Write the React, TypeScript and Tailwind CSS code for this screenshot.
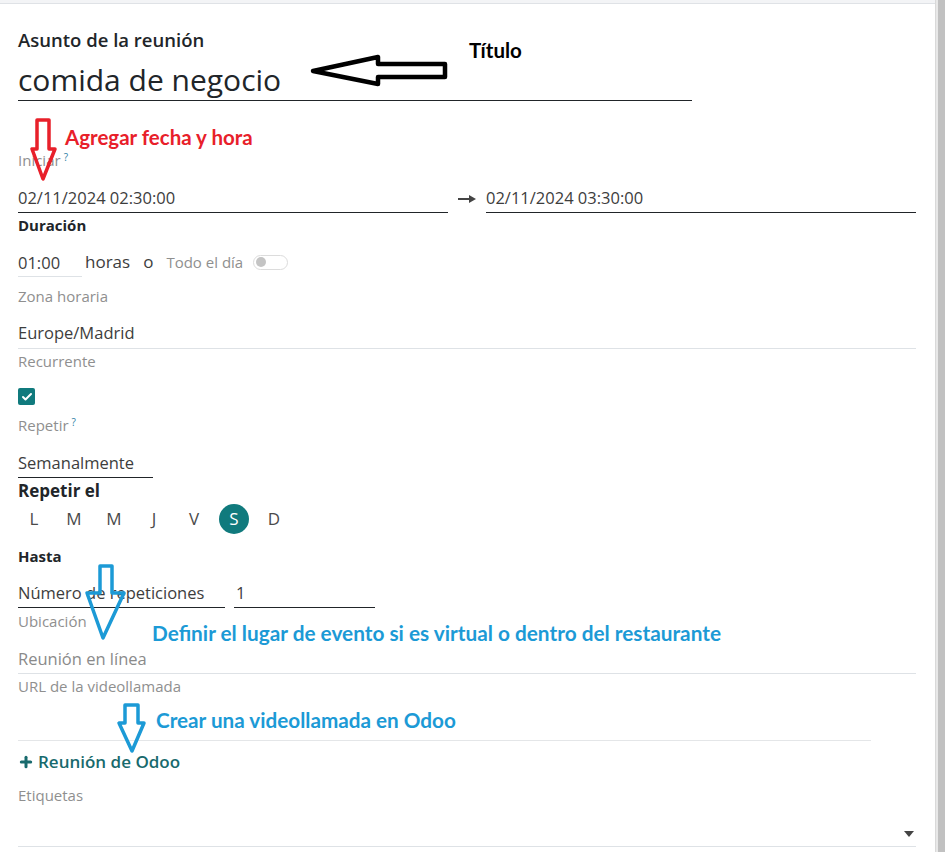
import { Check, Plus } from "lucide-react";

const days = ["L", "M", "M", "J", "V", "S", "D"];

function Label({ text, help, className = "" }: { text: string; help?: boolean; className?: string }) {
  return (
    <div className={`h-[20px] leading-[20px] text-[15px] text-[#8f8f8f] ${className}`}>
      {text}
      {help && <sup className="ml-[3px] text-[10px] text-[#2f7fa6]">?</sup>}
    </div>
  );
}

export default function App() {
  return (
    <div className="flex h-[852px] w-[945px] overflow-hidden bg-white font-['Open_Sans',sans-serif]">
      <div className="relative flex w-[936px] shrink-0 flex-col border-r border-[#d9d9d9]">
        {/* top strip */}
        <div className="h-[4px] shrink-0 border-b border-[#dfe2e6] bg-[#f3f4f6]" />

        <div className="flex flex-col pl-[18px] text-[#212529]">
          <div className="mt-[25px] h-[22px] text-[18.5px] font-semibold leading-[22px]">Asunto de la reunión</div>
          <div className="flex h-[50px] w-[674px] items-end border-b border-[#212529]">
            <span className="pb-[1px] text-[30px] leading-[38px]">comida de negocio</span>
          </div>

          <Label text="Iniciar" help className="mt-[49px]" />
          <div className="flex h-[43px] text-[16.5px] text-[#3d3d3d]">
            <div className="flex w-[430px] items-end border-b border-[#212529] pb-[2px] leading-[24px]">02/11/2024 02:30:00</div>
            <div className="flex w-[38px] items-end justify-center pb-[10px]">
              <svg width="18" height="8" viewBox="0 0 18 8">
                <line x1="0" y1="4" x2="13" y2="4" stroke="#444" strokeWidth="2" />
                <polygon points="11,0 18,4 11,8" fill="#444" />
              </svg>
            </div>
            <div className="flex w-[430px] items-end border-b border-[#212529] pb-[2px] leading-[24px]">02/11/2024 03:30:00</div>
          </div>

          <div className="h-[24px] text-[15px] font-bold leading-[24px]">Duración</div>
          <div className="flex h-[40px] items-end">
            <div className="w-[64px] border-b border-[#dee2e6] pb-[1px] text-[16.5px] leading-[24px] text-[#3d3d3d]">01:00</div>
            <div className="mb-[3px] flex h-[24px] items-center">
              <span className="ml-[3px] text-[17px] text-[#3d3d3d]">horas</span>
              <span className="ml-[13px] text-[17px] text-[#3d3d3d]">o</span>
              <span className="ml-[13px] text-[15px] text-[#8f8f8f]">Todo el día</span>
              <span className="ml-[10px] flex h-[15px] w-[35px] items-center rounded-full border border-[#dcdcdc] bg-white pl-[2px]">
                <span className="h-[10px] w-[10px] rounded-full bg-[#c4c4c4]" />
              </span>
            </div>
          </div>

          <Label text="Zona horaria" className="mt-[9px]" />
          <div className="flex h-[43px] w-[898px] items-end border-b border-[#dee2e6] pb-[3px] text-[16.5px] leading-[24px] text-[#3d3d3d]">
            Europe/Madrid
          </div>

          <Label text="Recurrente" className="mt-[2px]" />
          <div className="mt-[17px] flex h-[17px] w-[17px] items-center justify-center rounded-[2px] bg-[#107a7d]">
            <Check size={12} strokeWidth={4} className="text-white" />
          </div>

          <Label text="Repetir" help className="mt-[10px]" />
          <div className="flex h-[43px] w-[135px] items-end border-b border-[#212529] pb-[2px] text-[16.5px] leading-[24px] text-[#3d3d3d]">
            Semanalmente
          </div>

          <div className="h-[26px] text-[17px] font-bold leading-[26px]">Repetir el</div>
          <div className="flex h-[30px] gap-[10px] pl-[1px]">
            {days.map((d, i) => (
              <div
                key={i}
                className={`flex h-[30px] w-[30px] items-center justify-center rounded-full text-[17px] ${
                  i === 5 ? "bg-[#107a7d] text-white" : "text-[#4a4a4a]"
                }`}
              >
                {d}
              </div>
            ))}
          </div>

          <div className="mt-[12px] h-[20px] text-[15px] font-bold leading-[20px]">Hasta</div>
          <div className="flex h-[42px] gap-[9px] text-[16.5px] text-[#3d3d3d]">
            <div className="flex w-[207px] items-end whitespace-nowrap border-b border-[#212529] pb-[2px] leading-[24px]">Número de repeticiones</div>
            <div className="flex w-[141px] items-end border-b border-[#212529] pb-[2px] pl-[2px] leading-[24px]">1</div>
          </div>

          <Label text="Ubicación" className="mt-[3px]" />
          <div className="flex h-[43px] w-[898px] items-end border-b border-[#dee2e6] pb-[2px] text-[16.5px] leading-[24px] text-[#8a8a8a]">
            Reunión en línea
          </div>

          <Label text="URL de la videollamada" className="mt-[2px]" />
          <div className="h-[45px] w-[853px] border-b border-[#e4e6e8]" />

          <div className="mt-[10px] flex h-[22px] items-center gap-[4px] text-[17px] font-semibold text-[#186a6d]">
            <Plus size={16} strokeWidth={4.5} />
            Reunión de Odoo
          </div>

          <Label text="Etiquetas" className="mt-[12px]" />
          <div className="flex h-[42px] w-[898px] items-end justify-end border-b border-[#dee2e6] pb-[9px] pr-[2px]">
            <svg width="10" height="6" viewBox="0 0 10 6">
              <polygon points="0,0 10,0 5,6" fill="#444" />
            </svg>
          </div>
        </div>

        {/* annotations */}
        <svg className="pointer-events-none absolute left-0 top-0" width="935" height="852" viewBox="0 0 935 852">
          <polygon
            points="313,71 378,57 378,64 445,64 445,77 378,77 378,84"
            fill="none"
            stroke="#000"
            strokeWidth="4.5"
            strokeLinejoin="round"
          />
          <polygon
            points="37,120 49,120 49,149 55,149 43,179 32,149 37,149"
            fill="none"
            stroke="#e8202a"
            strokeWidth="3.5"
            strokeLinejoin="round"
          />
          <polygon
            points="100,566 112,566 112,593 124,593 103,638 87,593 100,593"
            fill="none"
            stroke="#1c9ad6"
            strokeWidth="3.5"
            strokeLinejoin="round"
          />
          <polygon
            points="125,705 138,705 138,723 144,723 132,751 119,723 125,723"
            fill="none"
            stroke="#1c9ad6"
            strokeWidth="3.5"
            strokeLinejoin="round"
          />
        </svg>
        <span className="absolute left-[469px] top-[38px] font-['Lato',sans-serif] text-[20.5px] font-bold leading-[24px] text-black">Título</span>
        <span className="absolute left-[65px] top-[125px] font-['Lato',sans-serif] text-[20.5px] font-bold leading-[24px] text-[#e8202a]">
          Agregar fecha y hora
        </span>
        <span className="absolute left-[152px] top-[621px] whitespace-nowrap font-['Lato',sans-serif] text-[20.8px] font-bold leading-[24px] text-[#1c9ad6]">
          Definir el lugar de evento si es virtual o dentro del restaurante
        </span>
        <span className="absolute left-[156px] top-[708px] font-['Lato',sans-serif] text-[20.7px] font-bold leading-[24px] text-[#1c9ad6]">
          Crear una videollamada en Odoo
        </span>
      </div>
      <div className="w-[9px] shrink-0 border-l-2 border-[#e8e8e8] bg-[#c1c1c1]" />
    </div>
  );
}
